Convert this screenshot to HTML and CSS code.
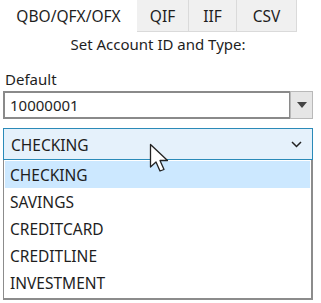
FILE: index.html
```html
<!DOCTYPE html>
<html lang="en">
<head>
    <meta charset="UTF-8">
    <title>Set Account ID and Type</title>
    <link rel="stylesheet" href="styles.css">
</head>
<body>
    <div class="tabs">
        <div class="tab active">QBO/QFX/OFX</div>
        <div class="tab tab-qif">QIF</div>
        <div class="tab tab-iif">IIF</div>
        <div class="tab tab-csv">CSV</div>
    </div>
    <div class="panel">
        <div class="caption">Set Account ID and Type:</div>
        <div class="label">Default</div>
        <div class="combo-edit">
            <div class="edit-box">10000001</div>
            <div class="edit-button">
                <svg width="10" height="6" viewBox="0 0 10 6"><path d="M0 0 H10 L5 6 Z" fill="#444"/></svg>
            </div>
        </div>
        <div class="select-wrap">
            <div class="select-box">
                <span>CHECKING</span>
                <svg width="11" height="7" viewBox="0 0 11 7"><path d="M1 1 L5.5 5.5 L10 1" fill="none" stroke="#222" stroke-width="1.5"/></svg>
            </div>
            <ul class="options">
                <li class="selected">CHECKING</li>
                <li>SAVINGS</li>
                <li>CREDITCARD</li>
                <li>CREDITLINE</li>
                <li>INVESTMENT</li>
            </ul>
            <svg class="cursor" width="24" height="32" viewBox="0 0 24 32">
                <path d="M1.5 1.5 V24 L7 19 L11 28 L15 26.5 L11 17.5 L18.5 17.5 Z" fill="#fff" stroke="#222" stroke-width="1.3" stroke-linejoin="round"/>
            </svg>
        </div>
    </div>
</body>
</html>
```

FILE: styles.css
```css
body {
    margin: 0;
    width: 321px;
    height: 303px;
    background-color: #fff;
    font-family: "Noto Sans", "Open Sans", sans-serif;
    color: #1e1e1e;
    overflow: hidden;
}
.tabs {
    display: flex;
    height: 32px;
}
.tab {
    display: flex;
    align-items: center;
    justify-content: center;
    font-size: 15.5px;
    background-color: #f0f0f0;
    border-right: 1px solid #dadada;
    border-bottom: 1px solid #dadada;
    box-sizing: border-box;
}
.tab.active {
    width: 137px;
    background-color: #fff;
    border-bottom: none;
    border-right: none;
}
.tab-qif { width: 52px; }
.tab-iif { width: 48px; }
.tab-csv { width: 60px; }
.panel {
    padding: 0 8px 0 3px;
}
.caption {
    text-align: center;
    font-size: 15px;
    margin-top: 2px;
    height: 23px;
}
.label {
    font-size: 15px;
    margin: 10px 0 0 2px;
    height: 22px;
    line-height: 24px;
}
.combo-edit {
    display: flex;
    height: 28px;
    margin-top: 2px;
}
.edit-box {
    flex: 1;
    border: 2px solid #8a8a8a;
    border-right-width: 1px;
    box-sizing: border-box;
    padding-left: 5px;
    font-size: 15px;
    line-height: 24px;
}
.edit-button {
    width: 21px;
    background-color: #e6e6e6;
    border: 1px solid #b9b9b9;
    display: flex;
    align-items: center;
    justify-content: center;
}
.select-wrap {
    position: relative;
    margin-top: 9px;
}
.select-box {
    height: 32px;
    box-sizing: border-box;
    border: 1px solid #2a8ab8;
    background-color: #e5f1fb;
    display: flex;
    align-items: center;
    justify-content: space-between;
    padding: 1px 10px 0 7px;
    font-size: 15.5px;
}
.options {
    list-style: none;
    margin: 0;
    padding: 1px 1px 2px;
    border: 1px solid #8c8c8c;
    border-top: none;
    border-right-width: 2px;
    border-bottom-width: 2px;
}
.options li {
    height: 27px;
    line-height: 29px;
    padding-left: 5px;
    font-size: 15.5px;
}
.options li.selected {
    background-color: #cce8ff;
}
.cursor {
    position: absolute;
    left: 146px;
    top: 15px;
}
```
